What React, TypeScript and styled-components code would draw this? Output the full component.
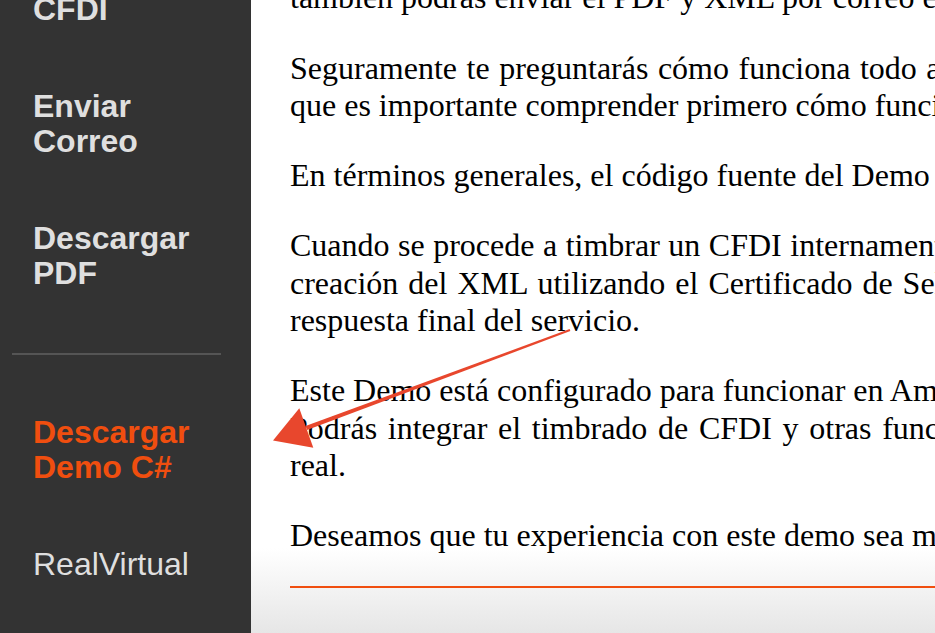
import React from "react";
import styled, { createGlobalStyle } from "styled-components";

const GlobalStyle = createGlobalStyle`
  html, body {
    margin: 0;
    padding: 0;
    overflow: hidden;
    background: #ffffff;
  }
`;

const Page = styled.div`
  position: relative;
  display: flex;
  height: 100vh;
  overflow: hidden;
`;

const Sidebar = styled.nav`
  flex: 0 0 251px;
  background: #333333;
  overflow: hidden;
`;

const Scroller = styled.div<{ $offset: number }>`
  margin-top: ${(p) => -p.$offset}px;
`;

const NavItem = styled.a<{ $active?: boolean; $brand?: boolean }>`
  display: block;
  padding: 31px 20px 31px 33px;
  font-family: "Liberation Sans", Arial, Helvetica, sans-serif;
  font-size: 32px;
  line-height: 35px;
  font-weight: ${(p) => (p.$brand ? 400 : 700)};
  color: ${(p) => (p.$active ? "#f04e0f" : "#dfdfdf")};
  text-decoration: none;
`;

const NavDivider = styled.hr`
  border: 0;
  height: 2px;
  background: #555555;
  margin: 31px 30px 29px 12px;
`;

const Main = styled.main`
  flex: 1;
  min-width: 0;
  overflow: hidden;
  background: linear-gradient(to bottom, #ffffff calc(100% - 85px), #e6e6e6 100%);
`;

const Article = styled.article`
  padding-left: 39px;
  font-family: "Liberation Serif", "Times New Roman", Times, serif;
  font-size: 32px;
  line-height: 37.3px;
  color: #000000;
`;

const Paragraph = styled.p`
  margin: 0 0 33px;

  &:last-child {
    margin-bottom: 31px;
  }
`;

const Line = styled.span<{ $spread?: number }>`
  display: block;
  white-space: nowrap;
  word-spacing: ${(p) => p.$spread ?? 0}px;
`;

const Rule = styled.hr`
  border: 0;
  height: 2px;
  background: #f04e0f;
  margin: 0 0 0 39px;
`;

const Annotation = styled.svg`
  position: absolute;
  top: 0;
  left: 0;
  pointer-events: none;
`;

export default function App() {
  return (
    <>
      <GlobalStyle />
      <Page>
        <Sidebar>
          <Scroller $offset={74}>
            <NavItem href="#">Cancelar CFDI</NavItem>
            <NavItem href="#">Enviar Correo</NavItem>
            <NavItem href="#">Descargar PDF</NavItem>
            <NavDivider />
            <NavItem href="#" $active>
              Descargar Demo C#
            </NavItem>
            <NavItem href="#" $brand>
              RealVirtual
            </NavItem>
          </Scroller>
        </Sidebar>
        <Main>
          <Scroller $offset={58}>
            <Article>
              <Paragraph>
                <Line>Al timbrar podrás visualizar el XML generado, descargar la representación impresa en PDF y</Line>
                <Line>también podrás enviar el PDF y XML por correo electrónico a tu cliente.</Line>
              </Paragraph>
              <Paragraph>
                <Line $spread={1.5}>Seguramente te preguntarás cómo funciona todo además de lo que ves en pantalla, por lo</Line>
                <Line>que es importante comprender primero cómo funciona el proceso de timbrado.</Line>
              </Paragraph>
              <Paragraph>
                <Line>En términos generales, el código fuente del Demo está organizado en capas sencillas de entender.</Line>
              </Paragraph>
              <Paragraph>
                <Line $spread={0.5}>Cuando se procede a timbrar un CFDI internamente se realizan varios pasos, desde la</Line>
                <Line $spread={2}>creación del XML utilizando el Certificado de Sello Digital, el sellado y el envío al PAC, hasta la</Line>
                <Line>respuesta final del servicio.</Line>
              </Paragraph>
              <Paragraph>
                <Line>Este Demo está configurado para funcionar en Ambiente de Pruebas. Una vez que lo conozcas</Line>
                <Line $spread={2.7}>Podrás integrar el timbrado de CFDI y otras funciones en tu propio sistema en ambiente</Line>
                <Line>real.</Line>
              </Paragraph>
              <Paragraph>
                <Line>Deseamos que tu experiencia con este demo sea muy productiva.</Line>
              </Paragraph>
            </Article>
            <Rule />
          </Scroller>
        </Main>
        <Annotation width="935" height="633" viewBox="0 0 935 633">
          <polygon
            points="570.35,330.94 569.65,329.06 305.54,425.93 307.06,430.07"
            fill="#e8472d"
          />
          <polygon points="273,440.5 299.3,408.3 313.3,447.7" fill="#e8472d" />
        </Annotation>
      </Page>
    </>
  );
}
